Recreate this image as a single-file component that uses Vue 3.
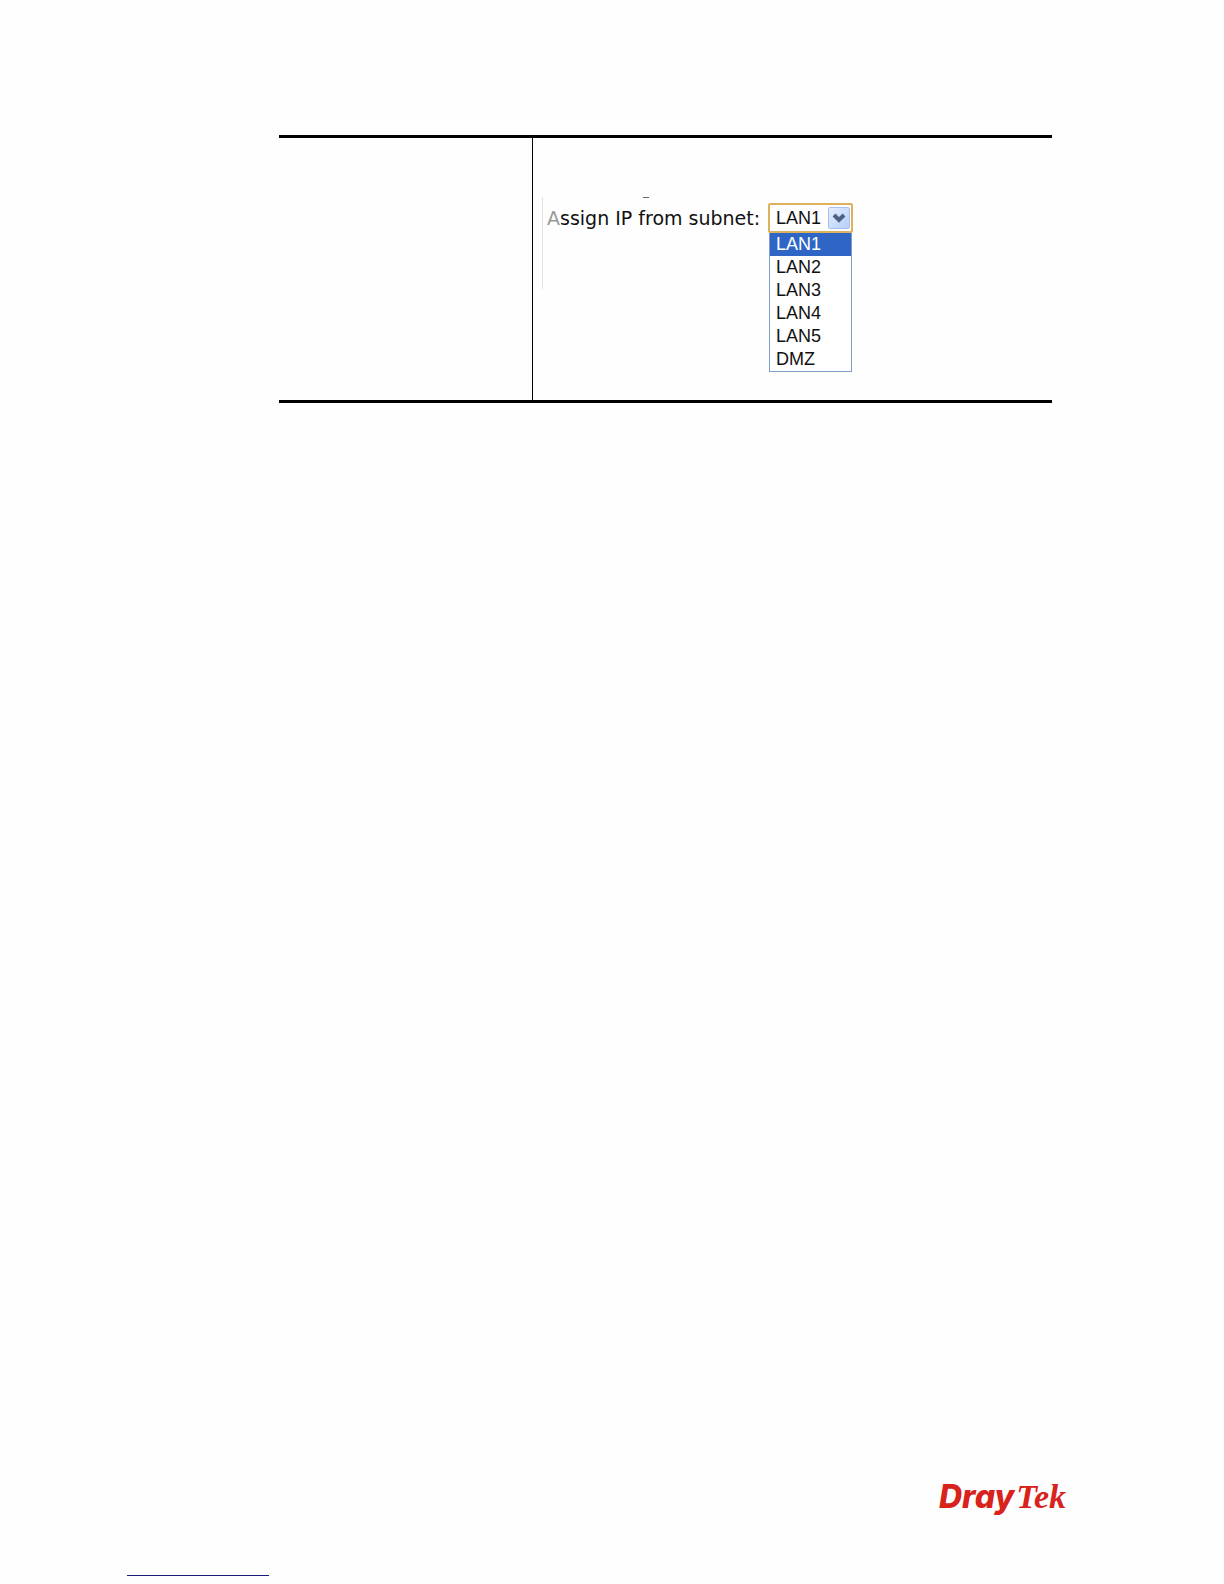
<template>
  <div class="page">
    <table class="settings-table">
      <tbody>
        <tr>
          <td class="name-cell"></td>
          <td class="value-cell">
            <div class="figure">
              <span class="mark" aria-hidden="true"></span>
              <label class="field-label" for="subnet"><span class="faded">A</span>ssign IP from subnet:</label>
              <div class="dropdown">
                <div class="select-box">
                  <select id="subnet" v-model="subnet">
                    <option v-for="name in subnets" :key="name" :value="name">{{ name }}</option>
                  </select>
                  <span class="arrow" aria-hidden="true">
                    <svg viewBox="0 0 20 20" width="20" height="20">
                      <path d="M5 7l5 5 5-5" fill="none" stroke="#4d6185" stroke-width="4" />
                    </svg>
                  </span>
                </div>
                <ul class="menu" role="listbox" aria-label="Subnet">
                  <li
                    v-for="name in subnets"
                    :key="name"
                    role="option"
                    :class="{ selected: name === subnet }"
                    :aria-selected="name === subnet"
                    @click="subnet = name"
                  >{{ name }}</li>
                </ul>
              </div>
            </div>
          </td>
        </tr>
      </tbody>
    </table>

    <footer class="footer">
      <div class="logo"><span class="logo-dray">Dray</span><span class="logo-tek">Tek</span></div>
      <a class="footer-link" href="#" aria-label="Page link"></a>
    </footer>
  </div>
</template>

<script setup>
import { ref } from 'vue'

const subnets = ['LAN1', 'LAN2', 'LAN3', 'LAN4', 'LAN5', 'DMZ']
const subnet = ref('LAN1')
</script>

<style>
body {
  margin: 0;
  background: #fefefe;
}
</style>

<style scoped>
.page {
  box-sizing: border-box;
  display: flex;
  flex-direction: column;
  min-height: 100vh;
  padding: 135px 158px 8px 127px;
  font-family: "Liberation Sans", Arial, sans-serif;
  color: #111;
}

.settings-table {
  margin: 0 14px 0 152px;
  border-collapse: separate;
  border-spacing: 0;
  border-top: 3px solid #000;
  border-bottom: 3px solid #000;
}

td {
  padding: 0;
  vertical-align: top;
}

.name-cell {
  width: 253px;
}

.value-cell {
  padding: 59px 8px 28px 9px;
  border-left: 1px solid #000;
}

.figure {
  position: relative;
  display: flex;
  align-items: flex-start;
  padding: 6px 0 0 5px;
}

.figure::before {
  content: "";
  position: absolute;
  top: 0;
  left: 0;
  width: 1px;
  height: 92px;
  background: #e4e4e4;
}

.mark {
  position: absolute;
  top: 0;
  left: 101px;
  width: 6px;
  height: 1px;
  background: #666;
}

.field-label {
  width: 221px;
  font-family: "DejaVu Sans", Verdana, sans-serif;
  font-size: 19px;
  line-height: 30px;
  white-space: nowrap;
}

.faded {
  color: #999;
}

.dropdown {
  width: 85px;
}

.select-box {
  position: relative;
}

select {
  appearance: none;
  display: block;
  box-sizing: border-box;
  width: 100%;
  height: 30px;
  margin: 0;
  padding: 0 24px 0 6px;
  border: 2px solid #deb15c;
  border-radius: 2px;
  background: #fff;
  color: #111;
  font-family: inherit;
  font-size: 18px;
  line-height: 26px;
}

.arrow {
  position: absolute;
  top: 4px;
  right: 3px;
  box-sizing: border-box;
  width: 22px;
  height: 22px;
  border: 1px solid #a9c0ee;
  border-radius: 2px;
  background: linear-gradient(135deg, #e4eefe, #b5cff8);
  pointer-events: none;
}

.arrow svg {
  display: block;
}

.menu {
  margin: 0 1px;
  padding: 0;
  border: 1px solid #7f9fc9;
  border-top: 0;
  background: #fff;
  list-style: none;
}

.menu li {
  padding-left: 6px;
  font-size: 18px;
  line-height: 23px;
}

.menu .selected {
  background: #2f66c5;
  color: #fff;
}

.footer {
  display: flex;
  flex-direction: column;
  margin-top: auto;
}

.logo {
  align-self: flex-end;
  line-height: 40px;
  color: #d8231c;
  white-space: nowrap;
}

.logo-dray {
  font-family: Inter, sans-serif;
  font-size: 32px;
  font-style: italic;
  font-weight: 800;
}

.logo-tek {
  margin-left: 2px;
  font-family: "Liberation Serif", serif;
  font-size: 34px;
  font-style: italic;
  font-weight: 700;
}

.footer-link {
  width: 142px;
  height: 52px;
  border-bottom: 1px solid #1b1b7c;
}
</style>
